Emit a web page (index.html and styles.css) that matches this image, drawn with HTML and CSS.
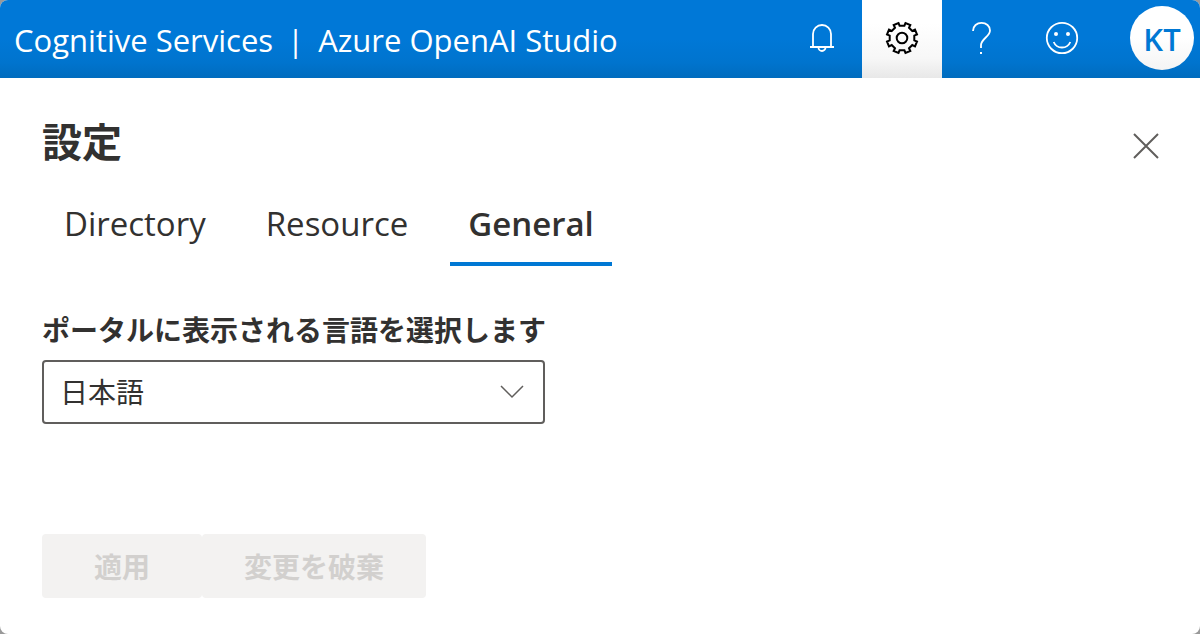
FILE: index.html
```html
<!DOCTYPE html>
<html lang="ja">
<head>
<meta charset="utf-8">
<meta name="viewport" content="width=device-width, initial-scale=1">
<title>Azure OpenAI Studio</title>
<link rel="stylesheet" href="styles.css">
</head>
<body>
<div class="app">
  <header class="topbar">
    <div class="brand">
      <a class="brand-link" href="#">Cognitive Services</a>
      <span class="brand-divider">|</span>
      <a class="brand-link" href="#">Azure OpenAI Studio</a>
    </div>
    <div class="actions">
      <button class="action" type="button" aria-label="Notifications">
        <svg class="icon" viewBox="-20 -20 40 40" aria-hidden="true">
          <path d="M-9 8.500V-4A9 9 0 0 1 9-4V8.500M-12 9H12M-3.500 9.500A3.500 3.500 0 0 0 3.500 9.500"/>
        </svg>
      </button>
      <button class="action action-active" type="button" aria-label="Settings">
        <svg class="icon" viewBox="-20 -20 40 40" aria-hidden="true">
          <path d="M-2.4-12.300L2.400-12.300L3.500-15L8.300-13L7-10.300L10.300-7L13-8.300L15-3.500L12.300-2.400L12.300 2.400L15 3.500L13 8.300L10.300 7L7 10.300L8.300 13L3.500 15L2.400 12.300L-2.400 12.300L-3.500 15L-8.300 13L-7 10.300L-10.300 7L-13 8.300L-15 3.500L-12.300 2.400L-12.300-2.400L-15-3.500L-13-8.300L-10.300-7L-7-10.300L-8.300-13L-3.500-15Z"/>
          <circle r="5.3"/>
        </svg>
      </button>
      <button class="action" type="button" aria-label="Help">
        <svg class="icon" viewBox="-20 -20 40 40" aria-hidden="true">
          <path d="M-9-7C-9-12-5-15.2-.5-15.2C4.300-15.2 8-12 8-7.500C8-1.500-1 1-1 7V10"/>
          <path class="dot" d="M-2 14H0V16H-2Z"/>
        </svg>
      </button>
      <button class="action" type="button" aria-label="Feedback">
        <svg class="icon" viewBox="-20 -20 40 40" aria-hidden="true">
          <circle r="15.200"/>
          <path d="M-8.300 4A9 9 0 0 0 8.300 4"/>
          <circle class="dot" cx="-6" cy="-4" r="2"/>
          <circle class="dot" cx="6" cy="-4" r="2"/>
        </svg>
      </button>
      <button class="avatar" type="button">KT</button>
    </div>
  </header>
  <main class="panel">
    <div class="panel-head">
      <h1 class="title">設定</h1>
      <button class="close" type="button" aria-label="閉じる">
        <svg class="close-icon" viewBox="0 0 28 28" aria-hidden="true"><path d="M2 2L26 26M26 2L2 26"/></svg>
      </button>
    </div>
    <div class="tabs" role="tablist">
      <button class="tab" type="button" role="tab" aria-selected="false">Directory</button>
      <button class="tab" type="button" role="tab" aria-selected="false">Resource</button>
      <button class="tab tab-active" type="button" role="tab" aria-selected="true">General</button>
    </div>
    <form class="form">
      <label class="label" for="language">ポータルに表示される言語を選択します</label>
      <div class="select-wrap">
        <select class="select" id="language">
          <option>日本語</option>
        </select>
        <svg class="chevron" viewBox="0 0 26 16" aria-hidden="true"><path d="M2 2L13 13L24 2"/></svg>
      </div>
      <div class="buttons">
        <button class="button" type="submit" disabled>適用</button>
        <button class="button" type="reset" disabled>変更を破棄</button>
      </div>
    </form>
  </main>
</div>
</body>
</html>
```
FILE: styles.css
```css
* {
  box-sizing: border-box;
}

body {
  margin: 0;
  background: #999;
  color: #323130;
  font-family: "Open Sans", "Noto Sans CJK JP", sans-serif;
}

button,
select {
  margin: 0;
  border: 0;
  background: none;
  color: inherit;
  font: inherit;
}

.app {
  min-height: 100vh;
  border-radius: 8px;
  overflow: hidden;
  background: #fff;
}

.topbar {
  display: flex;
  align-items: center;
  justify-content: space-between;
  height: 78px;
  padding: 0 6px 0 14px;
  background: linear-gradient(#0078d7 50%, #0074ce 80%, #006cbe);
  color: #fff;
}

.brand {
  display: flex;
  gap: 14px;
  padding-top: 2px;
  font-size: 31px;
  line-height: 40px;
  white-space: nowrap;
}

.brand-link {
  color: inherit;
  text-decoration: none;
}

.actions {
  display: flex;
  align-items: center;
}

.action {
  display: flex;
  align-items: center;
  justify-content: center;
  width: 80px;
  height: 78px;
  padding: 0 0 2px;
}

.action-active {
  background: linear-gradient(#fff 30%, #f7f7f7 75%, #e8e8e8);
  color: #000;
}

.icon {
  width: 40px;
  height: 40px;
  fill: none;
  stroke: currentColor;
  stroke-width: 1.8;
}

.action-active .icon {
  stroke-width: 2;
}

.dot {
  fill: currentColor;
  stroke: none;
}

.avatar {
  width: 64px;
  height: 64px;
  margin: 0 0 2px 28px;
  padding: 2px 0 0;
  border-radius: 50%;
  background: linear-gradient(#fff 50%, #f4f4f4);
  color: #0078d4;
  font-size: 31px;
  font-weight: 600;
  line-height: 40px;
}

.panel {
  padding: 36px 40px 36px 42px;
}

.panel-head {
  display: flex;
  align-items: center;
  justify-content: space-between;
}

.title {
  margin: 0;
  font-size: 40px;
  font-weight: 700;
  line-height: 56px;
}

.close {
  display: flex;
  padding: 8px 0 0;
}

.close-icon {
  width: 28px;
  height: 28px;
  fill: none;
  stroke: #605e5c;
  stroke-width: 2;
}

.tabs {
  display: flex;
  gap: 24px;
  padding: 8px 0 0 4px;
}

.tab {
  height: 88px;
  padding: 8px 18px 0;
  border-bottom: 4px solid transparent;
  font-size: 33px;
  line-height: 48px;
}

.tab-active {
  border-color: #0078d4;
  font-weight: 600;
}

.form {
  padding-top: 44px;
}

.label {
  display: block;
  font-size: 28px;
  font-weight: 700;
  line-height: 40px;
}

.select-wrap {
  position: relative;
  max-width: 503px;
  margin-top: 10px;
}

.select {
  display: block;
  width: 100%;
  height: 64px;
  padding: 0 56px 0 16px;
  appearance: none;
  border: 2px solid #605e5c;
  border-radius: 4px;
  background: #fff;
  font-size: 28px;
}

.chevron {
  position: absolute;
  top: 24px;
  right: 20px;
  width: 26px;
  height: 16px;
  fill: none;
  stroke: #605e5c;
  stroke-width: 1.5;
  pointer-events: none;
}

.buttons {
  display: flex;
  margin-top: 110px;
}

.button {
  min-width: 160px;
  height: 64px;
  padding: 0 42px;
  border-radius: 4px;
  background: #f3f2f1;
  color: #d2d0ce;
  font-size: 28px;
  font-weight: 700;
}
```
